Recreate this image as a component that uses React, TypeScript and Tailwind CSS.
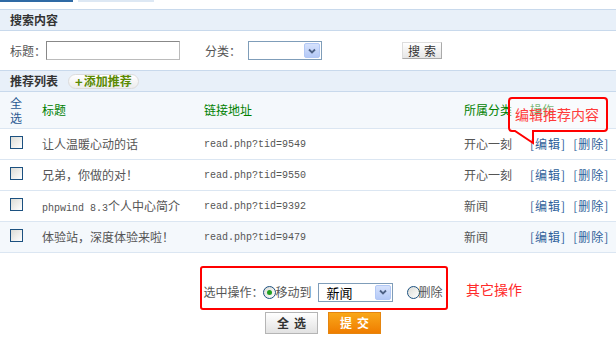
import React from "react"

const rows = [
  { title: "让人温暖心动的话", tid: "9549", cat: "开心一刻" },
  { title: "兄弟，你做的对！", tid: "9550", cat: "开心一刻" },
  { title: "phpwind 8.3个人中心简介", tid: "9392", cat: "新闻" },
  { title: "体验站，深度体验来啦！", tid: "9479", cat: "新闻", alt: true },
]

function Checkbox() {
  return (
    <span className="block w-[13px] h-[13px] border border-[#1c5180] bg-gradient-to-br from-[#dcdcd6] to-white" />
  )
}

function Radio({ on }: { on?: boolean }) {
  return (
    <span className="flex items-center justify-center w-[13px] h-[13px] rounded-full border border-[#1c5180] bg-gradient-to-br from-[#dcdcd6] to-white">
      {on && <span className="w-[5px] h-[5px] rounded-full bg-[#21a121]" />}
    </span>
  )
}

function Select({ value, width }: { value?: string; width: string }) {
  return (
    <div className={`flex items-center h-[19px] border border-[#7f9db9] bg-white pl-[8px] pr-[1px] ${width}`}>
      <span className="flex-1 text-[13px] text-black leading-none">{value}</span>
      <span className="flex items-center justify-center w-[16px] h-[15px] rounded-[2px] border border-[#b2c8f5] bg-gradient-to-b from-[#d6e2fc] to-[#b4c9f7]">
        <svg width="8" height="6" viewBox="0 0 8 6">
          <path d="M1 1.5 L4 4.5 L7 1.5" fill="none" stroke="#4d6185" strokeWidth="1.8" />
        </svg>
      </span>
    </div>
  )
}

function SectionHead({ children }: { children: React.ReactNode }) {
  return (
    <div className="flex items-center h-[22px] border-y border-[#c8d9ec] bg-[#e8f0f9] px-[10px] font-bold text-[12px] text-[#333]">
      {children}
    </div>
  )
}

export default function App() {
  return (
    <div
      className="relative w-[616px] h-[344px] overflow-hidden bg-white text-[12px] text-[#555]"
      style={{ fontFamily: '"Noto Sans CJK SC", sans-serif' }}
    >
      <div className="flex h-[2px] gap-[5px]">
        <div className="w-[73px] bg-[#2f6aa5]" />
        <div className="w-[76px] bg-[#dde8f4]" />
      </div>

      <div className="mt-[7px]">
        <SectionHead>搜索内容</SectionHead>
      </div>

      <div className="flex items-center h-[39px] pl-[10px]">
        <span className="w-[36px]">标题：</span>
        <div className="w-[134px] h-[19px] border border-[#bbb] border-t-[#888] border-l-[#888] bg-white" />
        <span className="ml-[25px] w-[43px]">分类：</span>
        <Select width="w-[74px]" />
        <button className="ml-[80px] w-[40px] h-[17px] border border-[#aaa] border-t-[#ddd] border-l-[#ddd] bg-gradient-to-b from-white to-[#e6e6e6] text-[12px] text-[#333] leading-none tracking-[4px] pl-[4px]">
          搜索
        </button>
      </div>

      <SectionHead>
        <span>推荐列表</span>
        <span className="ml-[10px] flex items-center h-[15px] px-[6px] rounded-full border border-[#dcdcdc] bg-gradient-to-b from-white to-[#ececec] text-[#5a8a00]">
          <span className="text-[13px] mr-[1px] leading-none">+</span>
          <span>添加推荐</span>
        </span>
      </SectionHead>

      <div className="flex items-center h-[36px] bg-[#f4f8fc]">
        <div className="w-[42px] pl-[10px] flex flex-col leading-[15px] text-[#2b5a93]">
          <span>全</span>
          <span>选</span>
        </div>
        <div className="w-[162px] text-[#008000]">标题</div>
        <div className="w-[260px] text-[#008000]">链接地址</div>
        <div className="w-[66px] text-[#008000]">所属分类</div>
        <div className="text-[#008000]">操作</div>
      </div>

      {rows.map((r) => (
        <div
          key={r.tid}
          className={`flex items-center h-[31px] border-t border-[#dbe6f2] ${r.alt ? "bg-[#f4f8fc]" : "bg-white"}`}
        >
          <div className="w-[42px] pl-[10px] -mt-[3px]">
            <Checkbox />
          </div>
          <div className="w-[162px]">
            {r.title.startsWith("phpwind") ? (
              <>
                <span className="text-[10px]" style={{ fontFamily: '"Liberation Mono", monospace' }}>
                  phpwind 8.3
                </span>
                个人中心简介
              </>
            ) : (
              r.title
            )}
          </div>
          <div className="w-[260px] text-[10px]" style={{ fontFamily: '"Liberation Mono", monospace' }}>
            read.php?tid={r.tid}
          </div>
          <div className="w-[66px]">{r.cat}</div>
          <div className="flex gap-[7px] text-[#2e5f9a] tracking-[1px]">
            <span>[编辑]</span>
            <span>[删除]</span>
          </div>
        </div>
      ))}
      <div className="border-t border-[#dbe6f2]" />

      <div className="flex flex-col items-center ml-[30px]">
        <div className="flex items-center h-[20px] mt-[29px]">
          <span>选中操作：</span>
          <Radio on />
          <span className="ml-[-1px] mr-[6px]">移动到</span>
          <Select value="新闻" width="w-[75px]" />
          <span className="ml-[14px]">
            <Radio />
          </span>
          <span className="-ml-[1px]">删除</span>
        </div>
        <div className="flex gap-[10px] mt-[10px]">
          <button className="w-[53px] h-[22px] border border-[#b5b5b5] bg-gradient-to-b from-white to-[#e2e2e2] font-bold text-[12px] text-[#333] tracking-[5px] pl-[5px]">
            全选
          </button>
          <button className="w-[53px] h-[22px] border border-[#e5850f] bg-gradient-to-b from-[#f9a718] to-[#ef7d00] font-bold text-[12px] text-white tracking-[5px] pl-[5px]">
            提交
          </button>
        </div>
      </div>

      {/* annotation: other operations */}
      <div className="absolute left-[200px] top-[266px] w-[248px] h-[44px] rounded-[3px] border-2 border-[#ff0000]" />
      <div className="absolute left-[466px] top-[279px] text-[14px] text-[#ff2a2a]">其它操作</div>

      {/* annotation: edit callout */}
      <svg className="absolute left-[505px] top-[94px]" width="108" height="54" viewBox="0 0 108 54">
        <path
          d="M7 4 H99 Q102 4 102 7 V34 Q102 37 99 37 H28 V49 L10 37 H7 Q4 37 4 34 V7 Q4 4 7 4 Z"
          fill="rgba(255,255,255,0.45)"
          stroke="#ff0000"
          strokeWidth="2"
        />
      </svg>
      <div className="absolute left-[515px] top-[104px] text-[14px] leading-[20px] text-[#ff3a3a]">编辑推荐内容</div>
    </div>
  )
}
